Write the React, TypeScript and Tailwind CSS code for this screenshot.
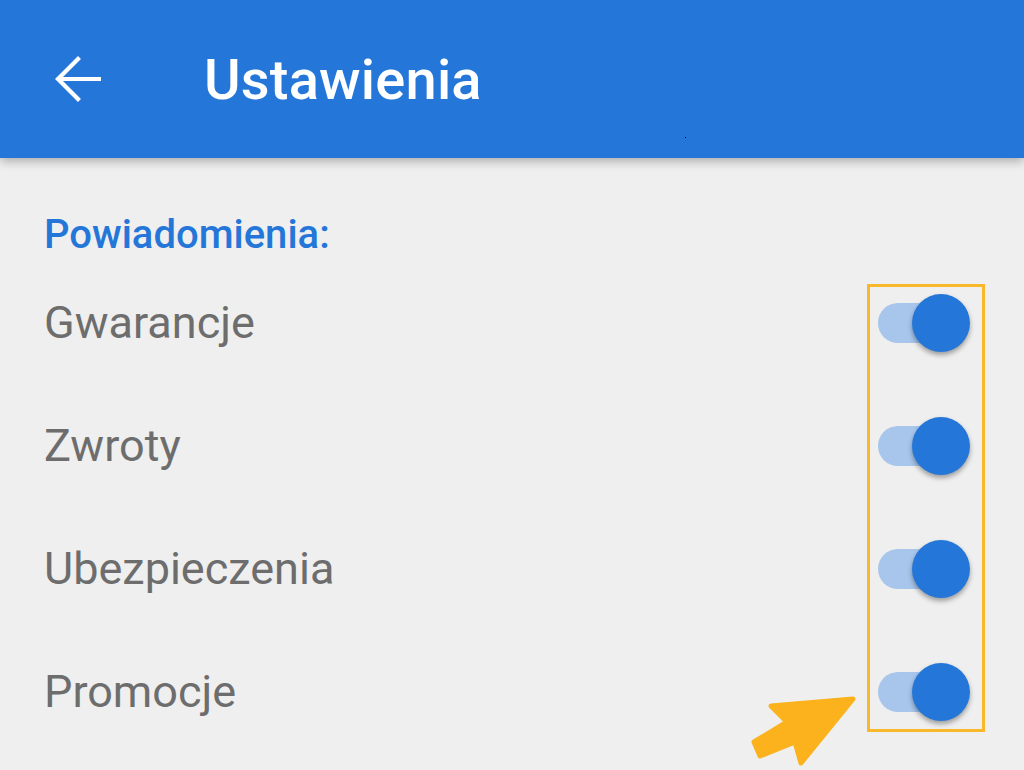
import React from "react";

function Toggle() {
  return (
    <div className="relative w-[92px] h-[58px] shrink-0">
      <div className="absolute left-0 top-[9px] w-[74px] h-[40px] rounded-full bg-[#a8c6ec]" />
      <div className="absolute right-0 top-0 w-[58px] h-[58px] rounded-full bg-[#2476d8] shadow-[0_3px_5px_rgba(0,0,0,0.35)]" />
    </div>
  );
}

const items = ["Gwarancje", "Zwroty", "Ubezpieczenia", "Promocje"];

export default function App() {
  return (
    <div
      className="relative w-[1024px] h-[770px] overflow-hidden bg-[#efefef] flex flex-col"
      style={{ fontFamily: "Roboto, 'Noto Sans', sans-serif" }}
    >
      <header className="relative z-10 h-[158px] shrink-0 bg-[#2477d9] flex items-center shadow-[0_3px_10px_rgba(0,0,0,0.3)]">
        <div className="w-[204px] pl-[55px] flex items-center">
          <svg width="46" height="46" viewBox="0 0 46 46" fill="none" stroke="white" strokeWidth="4.2" strokeLinecap="square">
            <path d="M44 23H4" />
            <path d="M23 3L3 23L23 43" strokeLinejoin="miter" />
          </svg>
        </div>
        <h1 className="text-white font-medium text-[56px] leading-none mt-[2px] tracking-[0.2px]">Ustawienia</h1>
        <div className="absolute left-[685px] top-[137px] w-[1px] h-[1px] bg-black" />
      </header>

      <main className="flex flex-col pl-[44px] pr-[54px]">
        <h2 className="pt-[57px] pb-[6px] text-[#2477d9] font-medium text-[40px] leading-none">Powiadomienia:</h2>
        <ul className="flex flex-col">
          {items.map((t) => (
            <li key={t} className="h-[123px] flex items-center justify-between">
              <span className="text-[#6d6d6d] text-[45px] leading-none">{t}</span>
              <Toggle />
            </li>
          ))}
        </ul>
      </main>

      <div className="absolute left-[867px] top-[284px] w-[118px] h-[448px] border-[3px] border-[#f8b82a]" />

      <svg className="absolute left-0 top-0" width="1024" height="770" viewBox="0 0 1024 770">
        <polygon
          points="853,699 771,706 787,722 754,742 760,756 795,742 801,763"
          fill="#fbb21c"
          stroke="#fbb21c"
          strokeWidth="5"
          strokeLinejoin="round"
        />
      </svg>
    </div>
  );
}
